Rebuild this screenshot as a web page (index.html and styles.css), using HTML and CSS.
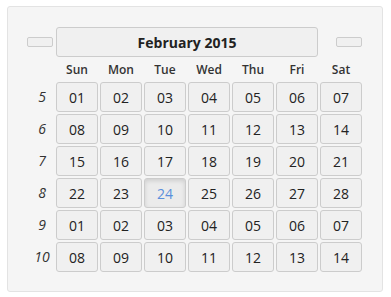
FILE: index.html
```html
<!DOCTYPE html>
<html lang="en">
<head>
    <meta charset="UTF-8">
    <title>Datepicker</title>
    <link rel="stylesheet" href="styles.css">
</head>
<body>
    <div class="picker">
        <div class="picker-grid">
            <!-- header row -->
            <div class="nav-cell"><button class="nav-btn"></button></div>
            <button class="title-btn">February 2015</button>
            <div class="nav-cell nav-right"><button class="nav-btn"></button></div>

            <!-- weekdays -->
            <div></div>
            <div class="wd">Sun</div>
            <div class="wd">Mon</div>
            <div class="wd">Tue</div>
            <div class="wd">Wed</div>
            <div class="wd">Thu</div>
            <div class="wd">Fri</div>
            <div class="wd">Sat</div>

            <div class="wk">5</div>
            <button class="day">01</button><button class="day">02</button><button class="day">03</button><button class="day">04</button><button class="day">05</button><button class="day">06</button><button class="day">07</button>

            <div class="wk">6</div>
            <button class="day">08</button><button class="day">09</button><button class="day">10</button><button class="day">11</button><button class="day">12</button><button class="day">13</button><button class="day">14</button>

            <div class="wk">7</div>
            <button class="day">15</button><button class="day">16</button><button class="day">17</button><button class="day">18</button><button class="day">19</button><button class="day">20</button><button class="day">21</button>

            <div class="wk">8</div>
            <button class="day">22</button><button class="day">23</button><button class="day today">24</button><button class="day">25</button><button class="day">26</button><button class="day">27</button><button class="day">28</button>

            <div class="wk">9</div>
            <button class="day">01</button><button class="day">02</button><button class="day">03</button><button class="day">04</button><button class="day">05</button><button class="day">06</button><button class="day">07</button>

            <div class="wk">10</div>
            <button class="day">08</button><button class="day">09</button><button class="day">10</button><button class="day">11</button><button class="day">12</button><button class="day">13</button><button class="day">14</button>
        </div>
    </div>
</body>
</html>
```

FILE: styles.css
```css
* {
    margin: 0;
    padding: 0;
    box-sizing: border-box;
}

body {
    font-family: 'Open Sans', 'Liberation Sans', sans-serif;
    background: #fff;
    color: #333;
}

/* panel */
.picker {
    width: fit-content;
    margin: 6px 0 0 7px;
    padding: 20px 20px 19px 19px;
    background: #f5f5f5;
    border: 1px solid #e3e3e3;
    border-radius: 3px;
}

.picker-grid {
    display: grid;
    grid-template-columns: 27px repeat(7, 42px);
    grid-template-rows: 30px 21px repeat(6, 30px);
    gap: 2px;
}

/* header */
.nav-cell {
    display: flex;
    align-items: center;
}

.nav-right {
    justify-content: flex-end;
}

.nav-btn {
    width: 26px;
    height: 10px;
    background: #f0f0f0;
    border: 1px solid #ccc;
    border-radius: 2px;
}

.title-btn {
    grid-column: span 6;
    font-family: inherit;
    font-size: 14px;
    font-weight: 700;
    color: #222;
    background: #f0f0f0;
    border: 1px solid #ccc;
    border-radius: 3px;
}

/* weekday labels */
.wd {
    font-size: 12px;
    font-weight: 600;
    color: #333;
    text-align: center;
    line-height: 21px;
}

/* week numbers */
.wk {
    font-size: 14px;
    font-style: italic;
    color: #333;
    text-align: center;
    padding-left: 3px;
    line-height: 30px;
}

/* day buttons */
.day {
    font-family: inherit;
    font-size: 14px;
    color: #222;
    background: #f0f0f0;
    border: 1px solid #ccc;
    border-radius: 3px;
}

.day.today {
    color: #5a8fdc;
    background: #ebebeb;
    box-shadow: inset 0 2px 4px rgba(0, 0, 0, 0.12);
}
```
